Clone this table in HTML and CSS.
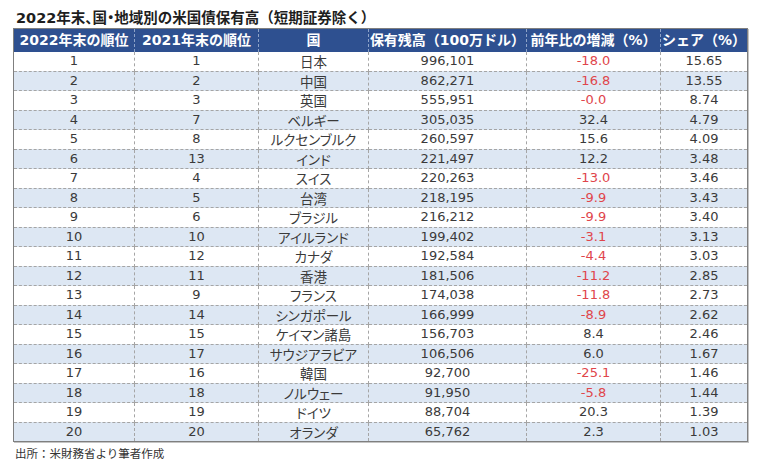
FILE: index.html
```html
<!DOCTYPE html>
<html lang="ja">
<head>
<meta charset="utf-8">
<title>2022年末、国・地域別の米国債保有高</title>
<link rel="stylesheet" href="styles.css">
</head>
<body>
<div class="page">
  <h1 class="title">2022年末<span class="tight">、国・</span>地域別の米国債保有高（短期証券除く）</h1>
  <table class="holdings">
    <colgroup>
      <col class="c1"><col class="c2"><col class="c3"><col class="c4"><col class="c5"><col class="c6">
    </colgroup>
    <thead>
      <tr>
        <th>2022年末の順位</th>
        <th>2021年末の順位</th>
        <th>国</th>
        <th>保有残高（100万ドル）</th>
        <th>前年比の増減（%）</th>
        <th>シェア（%）</th>
      </tr>
    </thead>
    <tbody>
      <tr><td>1</td><td>1</td><td class="jp">日本</td><td>996,101</td><td class="neg">-18.0</td><td>15.65</td></tr>
      <tr><td>2</td><td>2</td><td class="jp">中国</td><td>862,271</td><td class="neg">-16.8</td><td>13.55</td></tr>
      <tr><td>3</td><td>3</td><td class="jp">英国</td><td>555,951</td><td class="neg">-0.0</td><td>8.74</td></tr>
      <tr><td>4</td><td>7</td><td class="jp">ベルギー</td><td>305,035</td><td>32.4</td><td>4.79</td></tr>
      <tr><td>5</td><td>8</td><td class="jp">ルクセンブルク</td><td>260,597</td><td>15.6</td><td>4.09</td></tr>
      <tr><td>6</td><td>13</td><td class="jp">インド</td><td>221,497</td><td>12.2</td><td>3.48</td></tr>
      <tr><td>7</td><td>4</td><td class="jp">スイス</td><td>220,263</td><td class="neg">-13.0</td><td>3.46</td></tr>
      <tr><td>8</td><td>5</td><td class="jp">台湾</td><td>218,195</td><td class="neg">-9.9</td><td>3.43</td></tr>
      <tr><td>9</td><td>6</td><td class="jp">ブラジル</td><td>216,212</td><td class="neg">-9.9</td><td>3.40</td></tr>
      <tr><td>10</td><td>10</td><td class="jp">アイルランド</td><td>199,402</td><td class="neg">-3.1</td><td>3.13</td></tr>
      <tr><td>11</td><td>12</td><td class="jp">カナダ</td><td>192,584</td><td class="neg">-4.4</td><td>3.03</td></tr>
      <tr><td>12</td><td>11</td><td class="jp">香港</td><td>181,506</td><td class="neg">-11.2</td><td>2.85</td></tr>
      <tr><td>13</td><td>9</td><td class="jp">フランス</td><td>174,038</td><td class="neg">-11.8</td><td>2.73</td></tr>
      <tr><td>14</td><td>14</td><td class="jp">シンガポール</td><td>166,999</td><td class="neg">-8.9</td><td>2.62</td></tr>
      <tr><td>15</td><td>15</td><td class="jp">ケイマン諸島</td><td>156,703</td><td>8.4</td><td>2.46</td></tr>
      <tr><td>16</td><td>17</td><td class="jp">サウジアラビア</td><td>106,506</td><td>6.0</td><td>1.67</td></tr>
      <tr><td>17</td><td>16</td><td class="jp">韓国</td><td>92,700</td><td class="neg">-25.1</td><td>1.46</td></tr>
      <tr><td>18</td><td>18</td><td class="jp">ノルウェー</td><td>91,950</td><td class="neg">-5.8</td><td>1.44</td></tr>
      <tr><td>19</td><td>19</td><td class="jp">ドイツ</td><td>88,704</td><td>20.3</td><td>1.39</td></tr>
      <tr><td>20</td><td>20</td><td class="jp">オランダ</td><td>65,762</td><td>2.3</td><td>1.03</td></tr>
    </tbody>
  </table>
  <p class="source">出所：米財務省より筆者作成</p>
</div>
</body>
</html>
```

FILE: styles.css
```css
html, body {
  margin: 0;
  padding: 0;
  background: #ffffff;
}

body {
  font-family: "DejaVu Sans", "Noto Sans CJK JP", sans-serif;
  color: #3a3a3a;
}

.page {
  padding: 8px 0 0 13px;
  width: 736px;
}

.title {
  margin: 0;
  padding-left: 3px;
  font-size: 14.5px;
  line-height: 20px;
  font-weight: 700;
  color: #1e1e1e;
}

.title .tight {
  font-feature-settings: "palt";
}

.holdings {
  width: 734px;
  border-collapse: collapse;
  table-layout: fixed;
  border: 1px solid #7f7f7f;
  box-shadow: 1px 1px 0 #c4c4c4;
}

.c1 { width: 121px; }
.c2 { width: 124px; }
.c3 { width: 110px; }
.c4 { width: 158px; }
.c5 { width: 134px; }
.c6 { width: 87px; }

.holdings thead tr {
  height: 23px;
}

.holdings th {
  padding: 0;
  background: #2e5090;
  color: #ffffff;
  font-size: 14px;
  line-height: 18px;
  font-weight: 700;
  text-align: center;
  white-space: nowrap;
  border-left: 1px dashed #8ea3c8;
}

.holdings th:first-child {
  border-left: none;
}

.holdings tbody tr {
  height: 19.5px;
}

.holdings td {
  padding: 0;
  font-size: 13px;
  line-height: 16px;
  text-align: center;
  white-space: nowrap;
  border: 1px dashed #a5a5a5;
  border-top: none;
}

.holdings tbody tr:nth-child(even) td {
  background: #dde7f3;
}

.holdings td.jp {
  font-family: "Noto Sans CJK JP", sans-serif;
  font-size: 13.5px;
  font-feature-settings: "palt";
}

.holdings td.neg {
  color: #e0454b;
}

.holdings tbody tr:last-child td {
  border-bottom: none;
}

.source {
  margin: 3px 0 0 0;
  padding-left: 2px;
  font-family: "Noto Sans CJK JP", sans-serif;
  font-size: 11.5px;
  line-height: 16px;
  color: #333333;
}
```
